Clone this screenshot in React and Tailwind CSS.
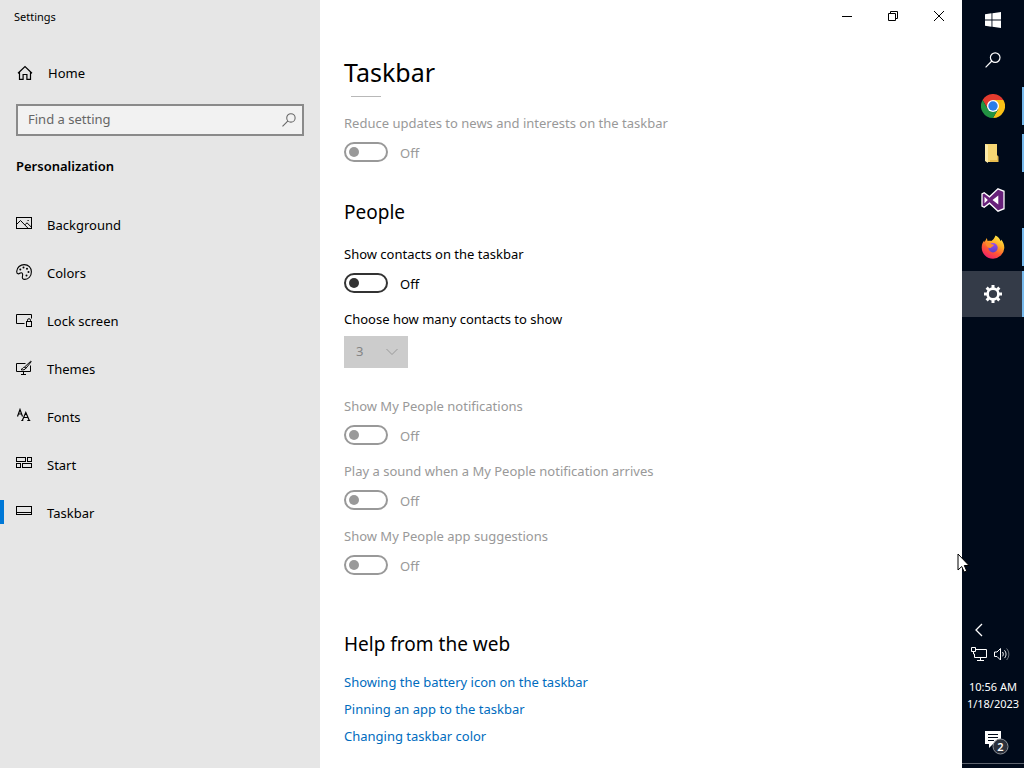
import { useState } from "react";

const stroke = { fill: "none", stroke: "currentColor", strokeWidth: 1 };

function HomeIcon() {
  return (
    <svg width="16" height="16" viewBox="0 0 16 16" {...stroke} strokeWidth="1.2">
      <path d="M1 8.2 8 1.6l7 6.6M2.5 7v7.4h3.6V9.5h3.8v4.9h3.6V7" />
    </svg>
  );
}

function SearchIcon({ size = 14 }) {
  return (
    <svg width={size} height={size} viewBox="0 0 16 16" {...stroke} strokeWidth="1.2">
      <circle cx="10.2" cy="5.6" r="4.8" />
      <path d="M6.8 9 .6 15.4" />
    </svg>
  );
}

function BackgroundIcon() {
  return (
    <svg width="16" height="16" viewBox="0 0 16 16" {...stroke}>
      <rect x=".5" y="1.5" width="15" height="11" />
      <path d="m.7 8.3 3.8-3.8 7.5 7.7M9 8.8l2-2 4.4 4.4" />
      <path d="M11.5 4.5h1.2" />
    </svg>
  );
}

function ColorsIcon() {
  return (
    <svg width="16" height="16" viewBox="0 0 16 16" {...stroke} strokeWidth="1.1">
      <path d="M.7 7.4C1 3.4 4.200.6 8.200.6c4.200 0 7.200 3.200 7.200 7.200 0 4.400-3 7.600-6.600 7.600-2 0-2.800-1.200-2.400-2.800.4-1.600.5-3.600-1.100-3.900C3.900 8.500 3.500 10.300 2 9.800 1 9.500.7 8.500.7 7.400Z" />
      <g fill="currentColor" stroke="none">
        <circle cx="4.3" cy="5.5" r="1" />
        <circle cx="7.5" cy="3.6" r="1" />
        <circle cx="11" cy="4.8" r="1" />
        <circle cx="12.5" cy="8" r="1" />
        <circle cx="10.5" cy="11.5" r="1" />
      </g>
    </svg>
  );
}

function LockScreenIcon() {
  return (
    <svg width="16" height="16" viewBox="0 0 16 16" {...stroke}>
      <path d="M8.500 11.500h-8v-9h15v4" />
      <rect x="10.5" y="9.5" width="5" height="5" />
      <path d="M11.500 9.500v-1.300a1.500 1.500 0 0 1 3 0v1.300" />
    </svg>
  );
}

function ThemesIcon() {
  return (
    <svg width="16" height="16" viewBox="0 0 16 16" {...stroke}>
      <path d="M9.500 3.500h-9v8h14V5.500M7.500 11.500v2.500M5 14.500h5" />
      <path d="m14.600 1.300-6 5.700 1.300 1.300 5.200-6.400c.3-.6-.1-.9-.5-.6Z" />
      <path d="M8.500 7.200c-1.500 0-1.700 1.300-3.500 2.500 2.200.5 4.300 0 4.700-1.500Z" />
    </svg>
  );
}

function FontsIcon() {
  return (
    <svg width="16" height="16" viewBox="0 0 16 16" {...stroke} strokeWidth="1.2">
      <path d="M1.500 8.500 4 1.500 6.500 8.500M2.500 6h3" />
      <path d="m6.300 12.500 3.500-8 3.500 8M7.500 9.500h4.500M5.300 12.500h2M11.300 12.500h3" />
    </svg>
  );
}

function StartIcon() {
  return (
    <svg width="16" height="16" viewBox="0 0 16 16" {...stroke}>
      <rect x=".5" y="1.5" width="9" height="4" />
      <rect x="11.5" y="1.5" width="4" height="4" />
      <rect x=".5" y="7.5" width="4" height="4" />
      <rect x="6.5" y="7.5" width="9" height="4" />
    </svg>
  );
}

function TaskbarIcon() {
  return (
    <svg width="16" height="16" viewBox="0 0 16 16" {...stroke}>
      <rect x=".5" y="2.5" width="15" height="8" />
      <path d="M.5 8.500h15" />
    </svg>
  );
}

function WindowsLogo() {
  return (
    <svg width="16" height="16" viewBox="0 0 16 16" fill="white">
      <path d="M0 2.200 6.500 1.300v6.200H0zM7.400 1.200 16 0v7.500H7.400zM0 8.400h6.500v6.300L0 13.800zM7.400 8.400H16V16l-8.600-1.200z" />
    </svg>
  );
}

function ChromeLogo() {
  return (
    <svg width="24" height="24" viewBox="0 0 24 24">
      <path d="M12 6h10.400A12 12 0 0 1 12 24l5.200-9Z" fill="#fbc116" />
      <path d="M1.600 6A12 12 0 0 1 22.400 6H12l-5.200 9Z" fill="#e33b2e" />
      <path d="M1.600 6 6.800 15 12 18l5.200-3L12 24A12 12 0 0 1 1.600 6Z" fill="#229342" />
      <circle cx="12" cy="12" r="6" fill="white" />
      <circle cx="12" cy="12" r="4.7" fill="#2a7de9" />
    </svg>
  );
}

function FolderLogo() {
  return (
    <svg width="24" height="24" viewBox="0 0 24 24">
      <path d="M4 3h12v12l1 1v5H6l-2-2z" fill="#f7d774" />
      <path d="M16 14l1.500 1.500V21H9v-2h7z" fill="#e9bd4e" />
      <path d="M4 3l3 1.200V22l-3-2z" fill="#fdeba8" />
    </svg>
  );
}

function VisualStudioLogo() {
  return (
    <svg width="24" height="24" viewBox="0 0 24 24">
      <path
        d="M17 .8 23 3.300v17.400L17 23.200 8.500 15.200 3.200 19.200 1 18V6l2.200-1.200 5.300 4Z"
        fill="#68217a"
        stroke="white"
        strokeWidth="1.3"
      />
      <path d="M17.300 7.400v9.200L11.500 12ZM3.500 8.700v6.600L6.800 12Z" fill="white" />
    </svg>
  );
}

function FirefoxLogo() {
  return (
    <svg width="24" height="24" viewBox="0 0 24 24">
      <defs>
        <linearGradient id="fox" x1=".8" y1="0" x2=".25" y2="1">
          <stop offset="0" stopColor="#fff04a" />
          <stop offset=".35" stopColor="#ffae25" />
          <stop offset=".65" stopColor="#ff5634" />
          <stop offset="1" stopColor="#ee1b70" />
        </linearGradient>
        <linearGradient id="globe" x1="0" y1="0" x2="0" y2="1">
          <stop offset="0" stopColor="#9b4df0" />
          <stop offset="1" stopColor="#5a3fc4" />
        </linearGradient>
      </defs>
      <path
        d="M14.500.6c2.500 1 4.300 3.200 5 5.400.6-.2.700-.8.600-1.400 2 2.200 3.300 5.200 3.200 8.400A11.300 11.300 0 0 1 12 23.700 11.300 11.300 0 0 1 .7 12.500c0-3 1-5.200 2.500-7l.3 1.700L5.800 3l.8 3c1.300-.5 2.600-.4 3.600 0 2.300-1 3.200-3 4.300-5.400Z"
        fill="url(#fox)"
      />
      <circle cx="12" cy="12.8" r="4.7" fill="url(#globe)" />
      <path d="M4.500 8.500c2.500-1.500 4.500-.5 6 .7 1 .2 2.200.2 2.500.7-.3 1.300-2.500 1.500-3 2.800-2 .8-4.500-.7-5.500-4.200Z" fill="#ff8a2a" />
    </svg>
  );
}

function GearIcon() {
  return (
    <svg width="20" height="20" viewBox="0 0 20 20" fill="none" stroke="white">
      <circle cx="10" cy="10" r="5.4" strokeWidth="2.6" />
      <g strokeWidth="3">
        <path d="M10 1v3M10 16v3M1 10h3M16 10h3" />
        <path d="m3.640 3.640 2.100 2.100M14.240 14.240l2.100 2.100M3.640 16.360l2.100-2.100M14.240 5.760l2.100-2.100" />
      </g>
    </svg>
  );
}

const navItems = [
  { name: "Background", icon: BackgroundIcon },
  { name: "Colors", icon: ColorsIcon },
  { name: "Lock screen", icon: LockScreenIcon },
  { name: "Themes", icon: ThemesIcon },
  { name: "Fonts", icon: FontsIcon },
  { name: "Start", icon: StartIcon },
  { name: "Taskbar", icon: TaskbarIcon },
];

const peopleOptions = [
  { id: "notifications", label: "Show My People notifications" },
  { id: "sound", label: "Play a sound when a My People notification arrives" },
  { id: "suggestions", label: "Show My People app suggestions" },
];

const helpLinks = [
  "Showing the battery icon on the taskbar",
  "Pinning an app to the taskbar",
  "Changing taskbar color",
];

const apps = [
  { name: "Google Chrome", icon: ChromeLogo, running: true },
  { name: "File Explorer", icon: FolderLogo, running: true },
  { name: "Visual Studio", icon: VisualStudioLogo },
  { name: "Firefox", icon: FirefoxLogo, running: true },
  { name: "Settings", icon: GearIcon, running: true, active: true },
];

function Toggle({ id, label, disabled }) {
  const [on, setOn] = useState(false);

  return (
    <div className={`flex flex-col gap-[9px] ${disabled ? "text-[#999999]" : "text-black"}`}>
      <label htmlFor={id} className="leading-5">{label}</label>
      <div className="flex h-5 items-center gap-3">
        <input
          id={id}
          type="checkbox"
          role="switch"
          checked={on}
          disabled={disabled}
          onChange={(e) => setOn(e.target.checked)}
          className="flex h-5 w-11 appearance-none items-center rounded-full border-2 border-[#333333] px-[3px] before:size-[10px] before:rounded-full before:bg-[#333333] checked:justify-end disabled:border-[#999999] disabled:before:bg-[#999999]"
        />
        <span className="pt-[2px] leading-5">{on ? "On" : "Off"}</span>
      </div>
    </div>
  );
}

function Sidebar({ current, onSelect }) {
  return (
    <aside className="flex w-80 shrink-0 flex-col bg-[#e6e6e6]">
      <div className="flex h-8 items-center px-[14px] pt-[2px] text-[11px]">Settings</div>
      <button className="mt-4 flex h-12 items-center gap-[15px] px-[17px] pt-[2px]">
        <HomeIcon />
        <span className="pt-[2px]">Home</span>
      </button>
      <div className="mx-4 mt-2 flex h-8 items-center border-2 border-[#8a8a8a] bg-[#f2f2f2] pr-[6px] pl-[10px] text-[#666666]">
        <input
          type="text"
          aria-label="Find a setting"
          placeholder="Find a setting"
          className="min-w-0 flex-1 bg-transparent outline-none placeholder:text-[#666666]"
        />
        <SearchIcon />
      </div>
      <h2 className="mt-5 px-4 leading-5 font-semibold">Personalization</h2>
      <nav className="mt-[24px] flex flex-col">
        {navItems.map(({ name, icon: Icon }) => (
          <button key={name} onClick={() => onSelect(name)} className="flex h-12 items-center">
            <span className={`h-6 w-1 ${current === name ? "bg-[#0078d7]" : ""}`} />
            <span className="ml-3 mr-[15px]"><Icon /></span>
            <span className="pt-[3px]">{name}</span>
          </button>
        ))}
      </nav>
    </aside>
  );
}

function WindowButtons() {
  return (
    <div className="flex h-8 justify-end">
      <button aria-label="Minimize" className="flex w-[46px] items-center justify-center">
        <svg width="10" height="10" viewBox="0 0 10 10" {...stroke}><path d="M0 5.500h10" /></svg>
      </button>
      <button aria-label="Restore" className="flex w-[46px] items-center justify-center">
        <svg width="10" height="10" viewBox="0 0 10 10" {...stroke}>
          <path d="M.5 2.500h7v7h-7zM2.500 2.500v-2h7v7h-2" />
        </svg>
      </button>
      <button aria-label="Close" className="flex w-[46px] items-center justify-center">
        <svg width="10" height="10" viewBox="0 0 10 10" {...stroke}><path d="m0 0 10 10M10 0 0 10" /></svg>
      </button>
    </div>
  );
}

function TaskbarSettings() {
  return (
    <main className="flex min-w-0 flex-1 flex-col bg-white">
      <WindowButtons />
      <div className="flex flex-col items-start px-6">
        <h1 className="mt-5 text-[25px] leading-10">Taskbar</h1>
        <hr className="mt-1 ml-[7px] w-[30px] border-[#b8b8b8]" />

        <div className="mt-4">
          <Toggle id="news" label="Reduce updates to news and interests on the taskbar" disabled />
        </div>

        <h2 className="mt-[35px] text-[19px] leading-[30px]">People</h2>
        <div className="mt-[17px]">
          <Toggle id="contacts" label="Show contacts on the taskbar" />
        </div>
        <label htmlFor="count" className="mt-4 leading-5">Choose how many contacts to show</label>
        <div className="relative mt-[7px]">
          <select
            id="count"
            disabled
            defaultValue="3"
            className="h-8 w-16 appearance-none bg-[#cccccc] px-3 text-[#858585] opacity-100"
          >
            <option>3</option>
          </select>
          <svg className="absolute top-3 right-[10px] text-[#999999]" width="12" height="8" viewBox="0 0 12 8" {...stroke}>
            <path d="m.5 1 5.500 5.500L11.500 1" />
          </svg>
        </div>

        <div className="mt-7 flex flex-col gap-4">
          {peopleOptions.map((option) => (
            <Toggle key={option.id} {...option} disabled />
          ))}
        </div>

        <h2 className="mt-[54px] text-[19px] leading-[30px]">Help from the web</h2>
        <ul className="mt-[10px]">
          {helpLinks.map((text) => (
            <li key={text} className="leading-[27px]">
              <a href="#" className="text-[#006cbe]">{text}</a>
            </li>
          ))}
        </ul>
      </div>
    </main>
  );
}

function SystemTaskbar() {
  return (
    <div className="flex w-[62px] shrink-0 flex-col bg-[#000a1a] text-white">
      <button aria-label="Start menu" className="flex h-10 items-center justify-center"><WindowsLogo /></button>
      <button aria-label="Search" className="flex h-10 items-center justify-center"><SearchIcon size={16} /></button>
      <div className="mt-[3px] flex flex-col gap-px">
        {apps.map(({ name, icon: Icon, running, active }) => (
          <button
            key={name}
            aria-label={name}
            className={`flex h-[46px] items-center ${active ? "bg-[#343b48]" : ""}`}
          >
            <span className="flex flex-1 justify-center pl-[2px]"><Icon /></span>
            <span className={`w-[2px] ${active ? "h-full" : "h-[38px]"} ${running ? "bg-[#76b9ed]" : ""}`} />
          </button>
        ))}
      </div>

      <div className="mt-auto flex flex-col">
        <button aria-label="Show hidden icons" className="flex h-5 items-center pl-[13px]">
          <svg width="8" height="14" viewBox="0 0 8 14" {...stroke} strokeWidth="1.3"><path d="M7 1 1 7l6 6" /></svg>
        </button>
        <div className="flex h-7 items-center gap-[7px] pl-[9px]">
          <svg width="16" height="14" viewBox="0 0 16 14" {...stroke}>
            <path d="M5 2.500h10.500v8H3.500V7M9.500 10.500v3M6 13.500h7" />
            <path d="M.5.5h4v4h-4zM2.500 4.500V7h1" />
          </svg>
          <svg width="16" height="14" viewBox="0 0 16 14" {...stroke}>
            <path d="M.5 5v4.500h2.500L6.500 13V1.500L3 5z" />
            <path d="M8.500 5c1 1.300 1 3 0 4.300M10.500 3.300c2 2.300 2 5.500 0 7.800" />
            <path d="M12.600 1.500c3 3.500 3 8 0 11.500" opacity=".45" />
          </svg>
        </div>
        <div className="mt-[10px] text-center text-[11px] leading-[17px]">
          <div>10:56 AM</div>
          <div>1/18/2023</div>
        </div>
        <button aria-label="2 notifications" className="mt-[18px] flex h-[26px] pl-[22px]">
          <svg width="26" height="26" viewBox="0 0 26 26">
            <path d="M1 1h16v13H9l-4 4v-4H1z" fill="white" />
            <path d="M4 4.500h10M4 7.500h10M4 10.500h6" stroke="#000a1a" />
            <circle cx="16.5" cy="16.5" r="7.5" fill="#2b303b" stroke="#8b8f96" />
            <text x="16.5" y="20.5" textAnchor="middle" fontSize="11" fontWeight="600" fill="white">2</text>
          </svg>
        </button>
        <hr className="mt-[7px] mb-1 border-[#5d636e]" />
      </div>
    </div>
  );
}

export default function App() {
  const [current, setCurrent] = useState("Taskbar");

  return (
    <div className="flex min-h-screen font-['Noto_Sans','Open_Sans',sans-serif] text-[13px] text-black">
      <Sidebar current={current} onSelect={setCurrent} />
      <TaskbarSettings />
      <SystemTaskbar />
      <svg className="pointer-events-none fixed top-[553px] left-[957px]" width="13" height="20" viewBox="0 0 13 20">
        <path d="M1 1v16l3.700-3.500 2.500 5.500 2.500-1.100-2.400-5.400H12Z" fill="white" stroke="black" />
      </svg>
    </div>
  );
}
